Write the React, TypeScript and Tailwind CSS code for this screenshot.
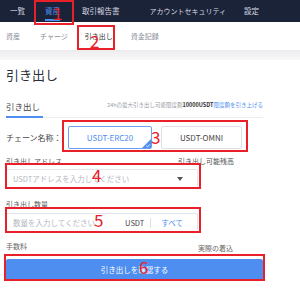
import React from 'react';

const font = { fontFamily: '"Noto Sans CJK JP", "Noto Sans", sans-serif' };

const Mark: React.FC<{ box: string; num: string; numPos: string }> = ({ box, num, numPos }) => (
    <>
        <div className={`absolute border-[2px] border-[#e8202a] pointer-events-none ${box}`} />
        <span className={`absolute text-[#e8202a] text-[17px] leading-none ${numPos}`}>{num}</span>
    </>
);

export default function App() {
    return (
        <div className="relative w-[300px] h-[289px] overflow-hidden bg-white whitespace-nowrap" style={font}>
            {/* top nav */}
            <div className="h-[22px] bg-[#1b2338] flex items-center text-[7.5px] text-[#d8dbe3]">
                <span className="ml-[10px]">一覧</span>
                <span className="ml-[20px] relative text-[#4d8ef0] h-full flex items-center">
                    資産
                    <span className="absolute left-0 right-0 bottom-[1px] h-[2px] bg-[#4d8ef0]" />
                </span>
                <span className="ml-[22px]">取引報告書</span>
                <span className="ml-[30px] text-[7px]">アカウントセキュリティ</span>
                <span className="ml-[18px]">設定</span>
            </div>

            {/* sub nav */}
            <div className="h-[28px] flex items-center text-[7px] text-[#8a8f99]">
                <span className="ml-[6px]">資産</span>
                <span className="ml-[20px]">チャージ</span>
                <span className="ml-[17px] text-[#333]">引き出し</span>
                <span className="ml-[18px]">資金記録</span>
            </div>
            <div className="h-[10px] bg-gradient-to-b from-[#ececee] to-[#f9f9fa]" />

            {/* card */}
            <div className="px-[6px] pr-[37px]">
                <div className="pt-[7px] text-[13px] leading-[16px] text-[#2a2f3a]">引き出し</div>

                <div className="mt-[14px] flex items-end border-b border-[#ececec] h-[21px]">
                    <div className="relative h-full w-[37px] text-[8.5px] text-[#444] leading-[14px] pt-[2px]">
                        引き出し
                        <span className="absolute left-0 right-0 bottom-[-1px] h-[2px] bg-[#4d8ef0]" />
                    </div>
                    <div className="ml-auto mb-[8px] text-[5.5px] text-[#9a9ea6]">
                        24hの最大引き出し可能限度額<span className="text-[#333] font-bold">10000USDT</span>
                        <span className="text-[#4d8ef0]">限度額を引き上げる</span>
                    </div>
                </div>

                <div className="mt-[8px] flex items-center h-[23px]">
                    <span className="text-[8px] text-[#444] w-[62px]">チェーン名称：</span>
                    <div className="relative w-[84px] h-[23px] border border-[#6aa1f2] rounded-[2px] flex items-center justify-center text-[8px] text-[#4d8ef0] overflow-hidden">
                        USDT-ERC20
                        <svg className="absolute right-0 bottom-0" width="9" height="9" viewBox="0 0 9 9">
                            <path d="M9 0 L9 9 L0 9 Z" fill="#4d8ef0" />
                            <path d="M4.3 6.8 L5.6 7.9 L7.8 5.4" stroke="#fff" strokeWidth="0.9" fill="none" />
                        </svg>
                    </div>
                    <div className="ml-[9px] w-[81px] h-[23px] border border-[#dcdfe6] rounded-[2px] flex items-center justify-center text-[8px] text-[#444]">
                        USDT-OMNI
                    </div>
                </div>

                <div className="mt-[8px] flex text-[7px] text-[#555] leading-[9px]">
                    <span className="w-[172px]">引き出しアドレス</span>
                    <span>引き出し可能残高</span>
                </div>
                <div className="mt-[3px] w-[192px] h-[20px] border border-[#e4e6eb] rounded-[2px] flex items-center px-[6px] text-[7.5px] text-[#b4b8c0]">
                    USDTアドレスを入力してください
                    <svg className="ml-auto mr-[8px]" width="6" height="4" viewBox="0 0 6 4">
                        <path d="M0 0 L6 0 L3 4 Z" fill="#555" />
                    </svg>
                </div>

                <div className="mt-[11px] text-[7px] text-[#555] leading-[9px]">引き出し数量</div>
                <div className="mt-[4px] w-[192px] h-[20px] border border-[#e4e6eb] rounded-[2px] flex items-center px-[6px] text-[7.5px] text-[#b4b8c0]">
                    数量を入力してください
                    <span className="ml-auto text-[#444]">USDT</span>
                    <span className="ml-[6px] w-px h-[10px] bg-[#e0e0e0]" />
                    <span className="ml-[10px] mr-[8px] text-[#4d8ef0]">すべて</span>
                </div>

                <div className="mt-[9px] flex text-[7px] text-[#666] leading-[9px]">
                    <span className="w-[192px]">手数料</span>
                    <span className="mt-[2px]">実際の着込</span>
                </div>
                <div className="mt-[6px] h-[22px] bg-[#4d8ef0] rounded-[2px] flex items-center justify-center text-[7.5px] text-white">
                    引き出しを確認する
                </div>
            </div>

            {/* annotations */}
            <Mark box="left-[34px] top-[0px] w-[40px] h-[25px]" num="1" numPos="left-[53px] top-[4px]" />
            <Mark box="left-[77px] top-[25px] w-[38px] h-[25px]" num="2" numPos="left-[90px] top-[32px]" />
            <Mark box="left-[62px] top-[120px] w-[186px] h-[32px]" num="3" numPos="left-[151px] top-[128px]" />
            <Mark box="left-[5px] top-[163px] w-[196px] h-[26px]" num="4" numPos="left-[92px] top-[166px]" />
            <Mark box="left-[5px] top-[207px] w-[196px] h-[26px]" num="5" numPos="left-[94px] top-[211px]" />
            <Mark box="left-[4px] top-[254px] w-[261px] h-[27px]" num="6" numPos="left-[139px] top-[258px]" />
        </div>
    );
}
